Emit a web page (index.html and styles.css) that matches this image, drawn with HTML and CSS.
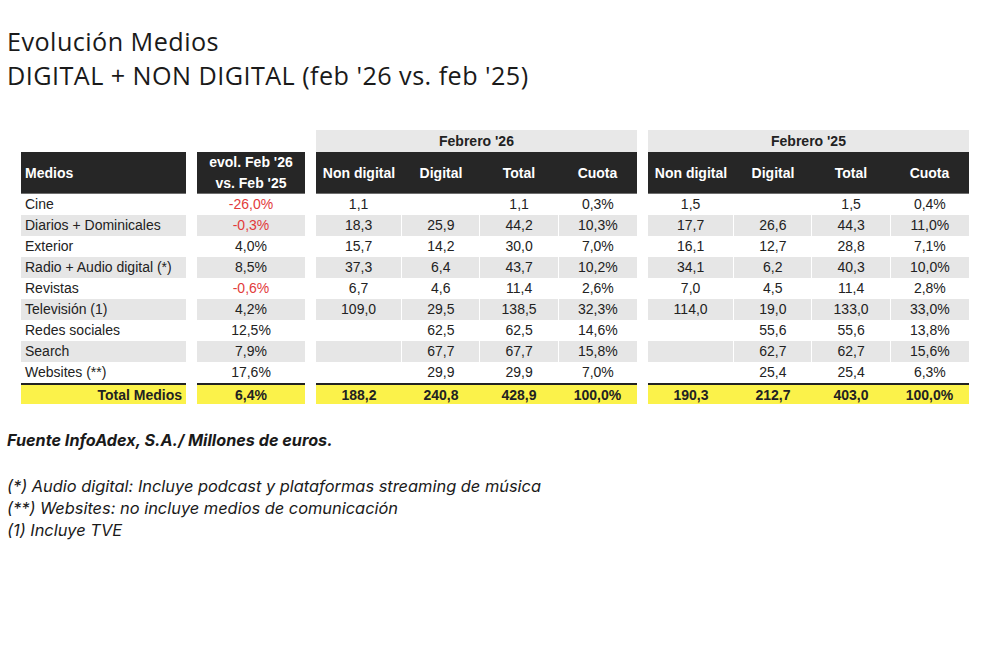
FILE: index.html
```html
<!DOCTYPE html>
<html lang="es">
<head>
<meta charset="utf-8">
<title>Evolución Medios</title>
<link rel="stylesheet" href="styles.css">
</head>
<body>
<div class="page">
  <h1 class="title">Evolución Medios<br>DIGITAL + NON DIGITAL (feb '26 vs. feb '25)</h1>

  <div class="table">
    <div class="block medios">
      <div class="hdr left">Medios</div>
      <div class="cell left">Cine</div>
      <div class="cell left alt">Diarios + Dominicales</div>
      <div class="cell left">Exterior</div>
      <div class="cell left alt">Radio + Audio digital (*)</div>
      <div class="cell left">Revistas</div>
      <div class="cell left alt">Televisión (1)</div>
      <div class="cell left">Redes sociales</div>
      <div class="cell left alt">Search</div>
      <div class="cell left">Websites (**)</div>
      <div class="cell total right">Total Medios</div>
    </div>

    <div class="block evol">
      <div class="hdr two">evol. Feb '26<br>vs. Feb '25</div>
      <div class="cell neg">-26,0%</div>
      <div class="cell alt neg">-0,3%</div>
      <div class="cell">4,0%</div>
      <div class="cell alt">8,5%</div>
      <div class="cell neg">-0,6%</div>
      <div class="cell alt">4,2%</div>
      <div class="cell">12,5%</div>
      <div class="cell alt">7,9%</div>
      <div class="cell">17,6%</div>
      <div class="cell total">6,4%</div>
    </div>

    <div class="block group">
      <div class="group-title">Febrero '26</div>
      <div class="row hrow"><div class="hc">Non digital</div><div class="hc">Digital</div><div class="hc">Total</div><div class="hc">Cuota</div></div>
      <div class="row"><div class="c">1,1</div><div class="c"></div><div class="c">1,1</div><div class="c">0,3%</div></div>
      <div class="row alt"><div class="c">18,3</div><div class="c">25,9</div><div class="c">44,2</div><div class="c">10,3%</div></div>
      <div class="row"><div class="c">15,7</div><div class="c">14,2</div><div class="c">30,0</div><div class="c">7,0%</div></div>
      <div class="row alt"><div class="c">37,3</div><div class="c">6,4</div><div class="c">43,7</div><div class="c">10,2%</div></div>
      <div class="row"><div class="c">6,7</div><div class="c">4,6</div><div class="c">11,4</div><div class="c">2,6%</div></div>
      <div class="row alt"><div class="c">109,0</div><div class="c">29,5</div><div class="c">138,5</div><div class="c">32,3%</div></div>
      <div class="row"><div class="c"></div><div class="c">62,5</div><div class="c">62,5</div><div class="c">14,6%</div></div>
      <div class="row alt"><div class="c"></div><div class="c">67,7</div><div class="c">67,7</div><div class="c">15,8%</div></div>
      <div class="row"><div class="c"></div><div class="c">29,9</div><div class="c">29,9</div><div class="c">7,0%</div></div>
      <div class="row trow"><div class="c">188,2</div><div class="c">240,8</div><div class="c">428,9</div><div class="c">100,0%</div></div>
    </div>

    <div class="block group">
      <div class="group-title">Febrero '25</div>
      <div class="row hrow"><div class="hc">Non digital</div><div class="hc">Digital</div><div class="hc">Total</div><div class="hc">Cuota</div></div>
      <div class="row"><div class="c">1,5</div><div class="c"></div><div class="c">1,5</div><div class="c">0,4%</div></div>
      <div class="row alt"><div class="c">17,7</div><div class="c">26,6</div><div class="c">44,3</div><div class="c">11,0%</div></div>
      <div class="row"><div class="c">16,1</div><div class="c">12,7</div><div class="c">28,8</div><div class="c">7,1%</div></div>
      <div class="row alt"><div class="c">34,1</div><div class="c">6,2</div><div class="c">40,3</div><div class="c">10,0%</div></div>
      <div class="row"><div class="c">7,0</div><div class="c">4,5</div><div class="c">11,4</div><div class="c">2,8%</div></div>
      <div class="row alt"><div class="c">114,0</div><div class="c">19,0</div><div class="c">133,0</div><div class="c">33,0%</div></div>
      <div class="row"><div class="c"></div><div class="c">55,6</div><div class="c">55,6</div><div class="c">13,8%</div></div>
      <div class="row alt"><div class="c"></div><div class="c">62,7</div><div class="c">62,7</div><div class="c">15,6%</div></div>
      <div class="row"><div class="c"></div><div class="c">25,4</div><div class="c">25,4</div><div class="c">6,3%</div></div>
      <div class="row trow"><div class="c">190,3</div><div class="c">212,7</div><div class="c">403,0</div><div class="c">100,0%</div></div>
    </div>
  </div>

  <div class="notes">
    <p class="source">Fuente InfoAdex, S.A./ Millones de euros.</p>
    <p class="note">(*) Audio digital: Incluye podcast y plataformas streaming de música<br>(**) Websites: no incluye medios de comunicación<br>(1) Incluye TVE</p>
  </div>
</div>
</body>
</html>
```

FILE: styles.css
```css
html, body {
  margin: 0;
  padding: 0;
  background: #ffffff;
}

.page {
  width: 1000px;
  height: 666px;
  box-sizing: border-box;
  padding: 24px 0 0 7px;
  color: #1c1c1c;
}

.title {
  margin: 0;
  font-family: "Open Sans", "Noto Sans", sans-serif;
  font-weight: 400;
  font-size: 25.2px;
  letter-spacing: 0.45px;
  line-height: 34px;
  color: #1a1a1a;
}

.table {
  display: flex;
  align-items: flex-end;
  gap: 11px;
  margin: 38px 0 0 14px;
  font-family: "Liberation Sans", Arial, sans-serif;
  font-size: 14px;
  color: #222;
}

.block {
  display: flex;
  flex-direction: column;
}

.medios { width: 165px; }
.evol { width: 108px; }
.group { width: 321px; }

.hdr {
  height: 41px;
  background: #262626;
  border-bottom: 1px solid #6e6e6e;
  color: #fff;
  font-weight: 700;
  display: flex;
  align-items: center;
  justify-content: center;
  text-align: center;
}

.hdr.left { justify-content: flex-start; padding-left: 4px; }
.hdr.two { line-height: 21px; }

.cell {
  height: 21px;
  line-height: 21px;
  text-align: center;
  white-space: nowrap;
}

.cell.left { text-align: left; padding-left: 4px; }
.cell.right { text-align: right; padding-right: 4px; }
.cell.alt { background: #e6e6e6; }
.cell.neg { color: #e23b3b; }

.cell.total,
.trow .c {
  background: #fbf24a;
  font-weight: 700;
  border-top: 2px solid #222;
  height: 19px;
  line-height: 20px;
}

.group-title {
  height: 22px;
  line-height: 22px;
  background: #e8e8e8;
  text-align: center;
  font-weight: 700;
}

.row {
  display: grid;
  grid-template-columns: 86fr 78fr 78fr 79fr;
  column-gap: 1px;
}

.hrow {
  column-gap: 0;
  height: 41px;
  background: #262626;
  border-bottom: 1px solid #6e6e6e;
}

.hc {
  color: #fff;
  font-weight: 700;
  display: flex;
  align-items: center;
  justify-content: center;
  white-space: nowrap;
}

.c {
  height: 21px;
  line-height: 21px;
  text-align: center;
}

.row.alt .c { background: #e6e6e6; }

.trow { column-gap: 0; }

.notes {
  margin-top: 25px;
  font-family: "Inter", "Liberation Sans", sans-serif;
  font-style: italic;
  font-size: 16.4px;
  color: #1a1a1a;
}

.source {
  margin: 0;
  font-weight: 700;
  font-size: 16.2px;
  line-height: 22px;
}

.note {
  margin: 24px 0 0 0;
  line-height: 22px;
}
```
